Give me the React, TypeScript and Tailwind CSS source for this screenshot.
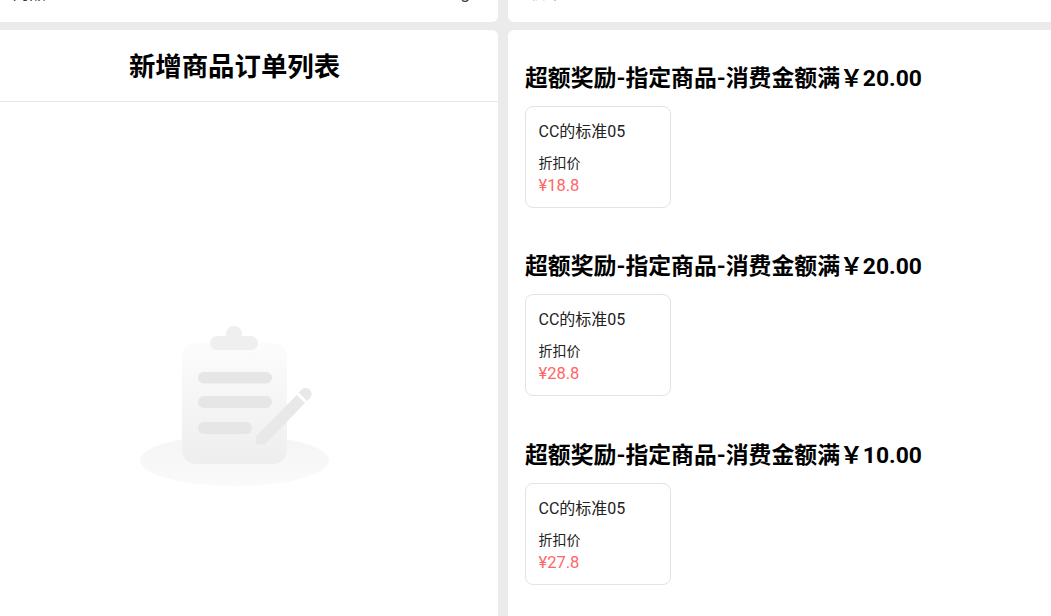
const rewards = [
  { id: 1, threshold: "20.00", price: "18.8" },
  { id: 2, threshold: "20.00", price: "28.8" },
  { id: 3, threshold: "10.00", price: "27.8" },
];

function EmptyIcon() {
  return (
    <svg width="190" height="162" viewBox="0 0 190 162" fill="none">
      <defs>
        <linearGradient id="board" x1="0" y1="0" x2="0" y2="1">
          <stop offset="0" stopColor="#fcfcfc" />
          <stop offset="1" stopColor="#eeeeee" />
        </linearGradient>
        <linearGradient id="base" x1="0" y1="0" x2="0" y2="1">
          <stop offset="0" stopColor="#f5f5f5" />
          <stop offset="1" stopColor="#fafafa" />
        </linearGradient>
      </defs>
      <ellipse cx="94.5" cy="134.5" rx="94.5" ry="25.5" fill="url(#base)" />
      <rect x="42" y="17" width="105" height="121" rx="14" fill="url(#board)" />
      <circle cx="94" cy="8" r="8" fill="#efefef" />
      <rect x="70" y="10" width="48" height="14" rx="7" fill="#efefef" />
      <rect x="58" y="46" width="74" height="11.5" rx="5.75" fill="#e6e6e6" />
      <rect x="58" y="70" width="74" height="12" rx="6" fill="#e6e6e6" />
      <rect x="58" y="96" width="54" height="12" rx="6" fill="#e6e6e6" />
      <path d="M116 118.5v-7.8L156.7 69l8.3 8-40 41.3z" fill="#e8e8e8" />
      <path d="M158.6 66.6l2.8-2.8a6 6 0 0 1 8.5 8.5l-2.8 2.8z" fill="#e8e8e8" />
    </svg>
  );
}

function RewardBlock({ threshold, price }: { threshold: string; price: string }) {
  return (
    <div className="h-[188.4px] shrink-0 pt-[34px]">
      <h3 className="text-[22.85px] leading-[30px] font-bold text-black">
        超额奖励-指定商品-消费金额满￥{threshold}
      </h3>
      <div className="mt-[12px] h-[102px] w-[146px] rounded-[8px] border border-[#e3e3e3] pl-[12.5px] pt-[14px]">
        <p className="text-[16px] leading-[21px] text-[#222]">CC的标准05</p>
        <p className="mt-[11px] text-[14px] leading-[20px] text-[#222]">折扣价</p>
        <p className="mt-[2px] text-[16.5px] leading-[22px] text-[#ff6666]">¥{price}</p>
      </div>
    </div>
  );
}

export default function App() {
  return (
    <div className="flex h-[616px] w-[1051px] gap-[9.5px] overflow-hidden bg-[#ebebeb] font-['Roboto','Noto_Sans_CJK_SC',sans-serif]">
      <div className="ml-[-29px] flex w-[527px] shrink-0 flex-col gap-[8px]">
        <div className="h-[22px] overflow-hidden rounded-br-[6px] bg-white">
          <div className="mt-[-20px] flex h-[26px] items-center justify-between pl-[41px] pr-[28px] text-[17px] leading-[26px] text-[#333]">
            <span>商品重量</span>
            <span>kg</span>
          </div>
        </div>
        <div className="flex flex-1 flex-col rounded-tr-[6px] bg-white">
          <div className="flex h-[72px] items-center justify-center border-b border-[#e8e8e8] pt-[4px]">
            <h2 className="text-[26.4px] font-bold text-black">新增商品订单列表</h2>
          </div>
          <div className="flex flex-1 justify-center pt-[224px]">
            <EmptyIcon />
          </div>
        </div>
      </div>
      <div className="flex flex-1 flex-col gap-[8px]">
        <div className="h-[22px] overflow-hidden rounded-bl-[6px] bg-white">
          <div className="mt-[-20px] h-[26px] pl-[22px] text-[17px] leading-[26px] text-[#999]">税率</div>
        </div>
        <div className="flex flex-1 flex-col overflow-hidden rounded-tl-[6px] bg-white pl-[17.5px]">
          {rewards.map((r) => (
            <RewardBlock key={r.id} threshold={r.threshold} price={r.price} />
          ))}
        </div>
      </div>
    </div>
  );
}
